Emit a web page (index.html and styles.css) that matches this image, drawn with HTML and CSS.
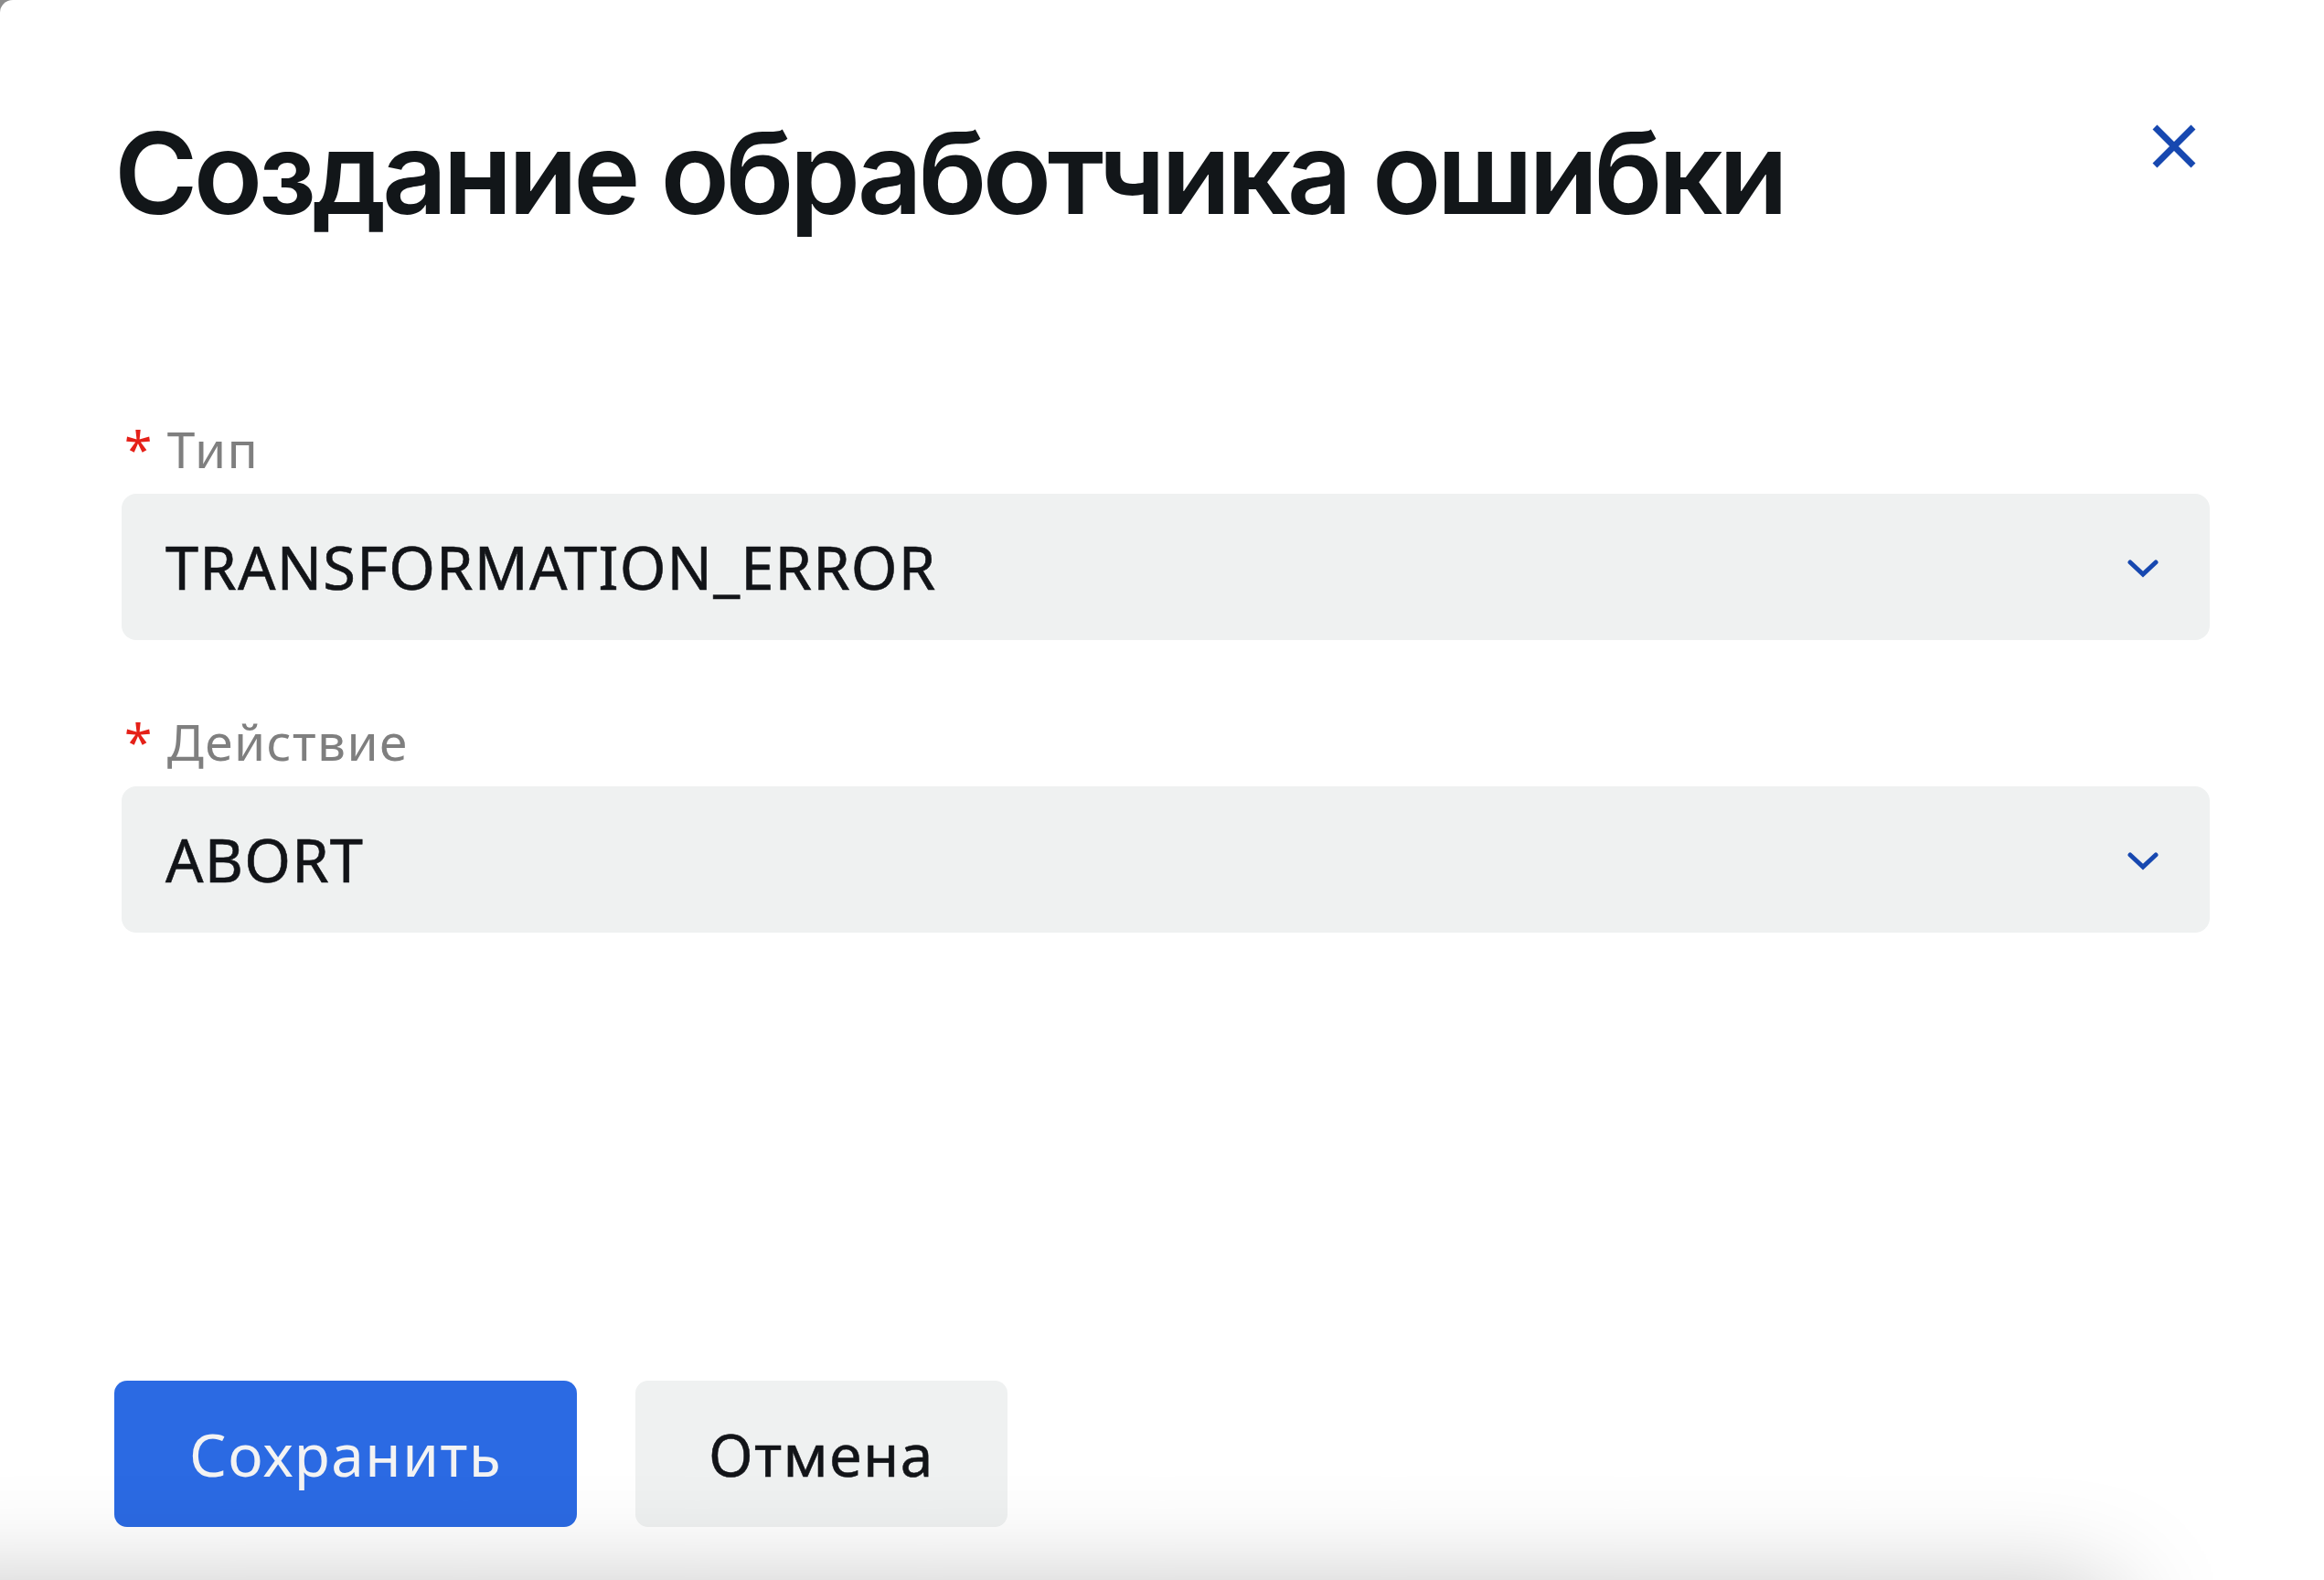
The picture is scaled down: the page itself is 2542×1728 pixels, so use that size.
FILE: index.html
```html
<!DOCTYPE html>
<html lang="ru">
<head>
<meta charset="utf-8">
<title>Создание обработчика ошибки</title>
<link rel="stylesheet" href="styles.css">
</head>
<body>
<div class="modal">
  <header class="modal-header">
    <h1 class="modal-title">Создание обработчика ошибки</h1>
    <button class="close-btn" aria-label="Закрыть">
      <svg width="48" height="48" viewBox="0 0 48 48"><path d="M3 3 L45 45 M45 3 L3 45" stroke="#1748b0" stroke-width="7" fill="none"/></svg>
    </button>
  </header>
  <form class="form">
    <div class="field">
      <label class="field-label"><span class="req">*</span>Тип</label>
      <div class="select">
        <span class="select-value">TRANSFORMATION_ERROR</span>
        <svg class="chevron" width="34" height="20" viewBox="0 0 34 20"><polyline points="3,3 17,16 31,3" stroke="#1748b0" stroke-width="5" fill="none" stroke-linecap="round" stroke-linejoin="miter"/></svg>
      </div>
    </div>
    <div class="field field-second">
      <label class="field-label"><span class="req">*</span>Действие</label>
      <div class="select">
        <span class="select-value">ABORT</span>
        <svg class="chevron" width="34" height="20" viewBox="0 0 34 20"><polyline points="3,3 17,16 31,3" stroke="#1748b0" stroke-width="5" fill="none" stroke-linecap="round" stroke-linejoin="miter"/></svg>
      </div>
    </div>
  </form>
  <footer class="modal-footer">
    <button class="btn btn-primary">Сохранить</button>
    <button class="btn btn-secondary">Отмена</button>
  </footer>
  <div class="bottom-shadow"></div>
</div>
</body>
</html>
```

FILE: styles.css
```css
* { box-sizing: border-box; }
html, body {
  margin: 0;
  padding: 0;
  height: 100%;
}
body {
  background: #8c8c8c;
  overflow: hidden;
  font-family: "Noto Sans", "Open Sans", sans-serif;
}
.modal {
  position: relative;
  background: #ffffff;
  height: 1728px;
  border-top-left-radius: 14px;
  padding: 112px 125px 0 125px;
  overflow: hidden;
}
.modal-header {
  display: flex;
  justify-content: space-between;
  align-items: flex-start;
}
.modal-title {
  margin: 0;
  font-family: "Inter", "Noto Sans", sans-serif;
  font-weight: 600;
  font-size: 124px;
  line-height: 154px;
  color: #121619;
  letter-spacing: -4.6px;
}
.close-btn {
  margin: 24px 15px 0 0;
  padding: 0;
  border: 0;
  background: none;
  width: 48px;
  height: 48px;
  display: flex;
}
.form {
  padding-left: 8px;
  margin-top: 190px;
}
.field {
  display: flex;
  flex-direction: column;
  gap: 14px;
}
.field-second {
  margin-top: 76px;
}
.field-label {
  font-size: 55px;
  line-height: 70px;
  color: #7f7f7f;
  letter-spacing: 1.4px;
  display: flex;
}
.req {
  color: #e52119;
  margin-left: 3px;
  margin-right: 15px;
}
.select {
  height: 160px;
  background: #eff1f1;
  border-radius: 16px;
  display: flex;
  align-items: center;
  justify-content: space-between;
  padding: 0 56px 0 48px;
}
.select-value {
  font-size: 65px;
  color: #121418;
  letter-spacing: 1.2px;
  -webkit-text-stroke: 0.6px #121418;
}
.chevron {
  display: block;
  margin-top: 4px;
}
.modal-footer {
  display: flex;
  gap: 64px;
  margin-top: 490px;
}
.btn {
  height: 160px;
  border: 0;
  border-radius: 14px;
  font-family: "Noto Sans", "Open Sans", sans-serif;
  font-size: 64px;
  letter-spacing: 1.5px;
  padding: 0;
}
.btn-primary {
  width: 506px;
  background: #2b6ae3;
  color: #f3f3f3;
}
.btn-secondary {
  width: 407px;
  background: #eff1f1;
  color: #121418;
  -webkit-text-stroke: 0.5px #121418;
}
.bottom-shadow {
  position: absolute;
  left: -200px;
  right: 230px;
  top: 1740px;
  height: 200px;
  box-shadow: 0 0 120px rgba(0, 0, 0, 0.26);
  background: #ddd;
}
```
